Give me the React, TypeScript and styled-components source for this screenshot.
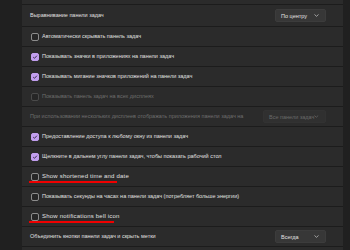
import React from 'react';
import styled, { createGlobalStyle } from 'styled-components';

const GlobalStyle = createGlobalStyle`
  html, body {
    margin: 0;
    padding: 0;
    background: #202020;
    font-family: 'Liberation Sans', Arial, sans-serif;
  }
`;

const Page = styled.div`
  width: 350px;
  height: 250px;
  overflow: hidden;
  box-sizing: border-box;
  padding: 0 7px 0 22px;
  background: #202020;
`;

const Group = styled.div`
  display: flex;
  flex-direction: column;
  gap: 1px;
  background: #1c1c1c;
`;

const Stub = styled.div<{ $h: number }>`
  height: ${(p) => p.$h}px;
  background: #2b2b2b;
`;

const Row = styled.div<{ $h?: number; $check?: boolean }>`
  height: ${(p) => p.$h ?? 19}px;
  box-sizing: border-box;
  display: flex;
  align-items: center;
  gap: 3px;
  padding: 0 17px 0 ${(p) => (p.$check ? 9 : 8)}px;
  background: #2b2b2b;
`;

const Label = styled.span<{ $dim?: boolean; $latin?: boolean }>`
  position: relative;
  flex: 1;
  font-size: ${(p) => (p.$latin ? 6 : 5.5)}px;
  letter-spacing: ${(p) => (p.$latin ? 0.2 : 0)}px;
  line-height: 7px;
  white-space: nowrap;
  color: ${(p) => (p.$dim ? '#6e6e6e' : '#e0e0e0')};
`;

const Marker = styled.span<{ $w: number }>`
  position: absolute;
  left: -13px;
  top: 8px;
  width: ${(p) => p.$w}px;
  height: 2px;
  background: #ee0000;
`;

const Box = styled.span<{ $checked?: boolean; $dim?: boolean }>`
  flex: none;
  width: 8px;
  height: 8px;
  box-sizing: border-box;
  border-radius: 2px;
  display: flex;
  align-items: center;
  justify-content: center;
  background: ${(p) => (p.$checked ? '#c19eee' : '#262626')};
  border: 1px solid
    ${(p) => (p.$checked ? '#c19eee' : p.$dim ? '#4a4a4a' : '#8c8c8c')};
`;

const Select = styled.div<{ $w: number; $dim?: boolean }>`
  flex: none;
  width: ${(p) => p.$w}px;
  height: 13px;
  box-sizing: border-box;
  display: flex;
  align-items: center;
  justify-content: space-between;
  padding: 0 6px 0 5px;
  border-radius: 2px;
  background: ${(p) => (p.$dim ? '#303030' : '#373737')};
  border: 1px solid ${(p) => (p.$dim ? '#323232' : '#3c3c3c')};
  font-size: 5.5px;
  color: ${(p) => (p.$dim ? '#6a6a6a' : '#e2e2e2')};
  white-space: nowrap;
`;

const Chevron = ({ dim }: { dim?: boolean }) => (
  <svg width="5" height="3" viewBox="0 0 5 3">
    <polyline
      points="0.5,0.5 2.5,2.3 4.5,0.5"
      fill="none"
      stroke={dim ? '#666' : '#bdbdbd'}
      strokeWidth="0.8"
    />
  </svg>
);

const Check = () => (
  <svg width="6" height="6" viewBox="0 0 6 6">
    <polyline points="1.2,3.1 2.5,4.3 4.9,1.7" fill="none" stroke="#2a1f3a" strokeWidth="0.9" />
  </svg>
);

interface IItem {
  text: string;
  kind: 'check' | 'plain';
  checked?: boolean;
  dim?: boolean;
  latin?: boolean;
  select?: { value: string; width: number; dim?: boolean };
  marker?: number;
  h?: number;
}

const items: IItem[] = [
  { text: 'Выравнивание панели задач', kind: 'plain', select: { value: 'По центру', width: 51 }, h: 21 },
  { text: 'Автоматически скрывать панель задач', kind: 'check' },
  { text: 'Показывать значки в приложениях на панели задач', kind: 'check', checked: true },
  { text: 'Показывать мигание значков приложений на панели задач', kind: 'check', checked: true },
  { text: 'Показывать панель задач на всех дисплеях', kind: 'check', dim: true },
  {
    text: 'При использовании нескольких дисплеев отображать приложения панели задач на',
    kind: 'plain',
    dim: true,
    select: { value: 'Все панели задач', width: 63, dim: true },
  },
  { text: 'Предоставление доступа к любому окну из панели задач', kind: 'check', checked: true },
  { text: 'Щелкните в дальнем углу панели задач, чтобы показать рабочий стол', kind: 'check', checked: true },
  { text: 'Show shortened time and date', kind: 'check', latin: true, marker: 88 },
  { text: 'Показывать секунды на часах на панели задач (потребляет больше энергии)', kind: 'check' },
  { text: 'Show notifications bell icon', kind: 'check', latin: true, marker: 85 },
  { text: 'Объединить кнопки панели задач и скрыть метки', kind: 'plain', select: { value: 'Всегда', width: 51 } },
];

function App() {
  return (
    <>
      <GlobalStyle />
      <Page>
        <Group>
          <Stub $h={4} />
          {items.map((item) => (
            <Row key={item.text} $h={item.h} $check={item.kind === 'check'}>
              {item.kind === 'check' && (
                <Box $checked={item.checked} $dim={item.dim}>
                  {item.checked && <Check />}
                </Box>
              )}
              <Label $dim={item.dim} $latin={item.latin}>
                {item.text}
                {item.marker && <Marker $w={item.marker} />}
              </Label>
              {item.select && (
                <Select $w={item.select.width} $dim={item.select.dim}>
                  {item.select.value}
                  <Chevron dim={item.select.dim} />
                </Select>
              )}
            </Row>
          ))}
          <Stub $h={10} />
        </Group>
      </Page>
    </>
  );
}

export default App;
